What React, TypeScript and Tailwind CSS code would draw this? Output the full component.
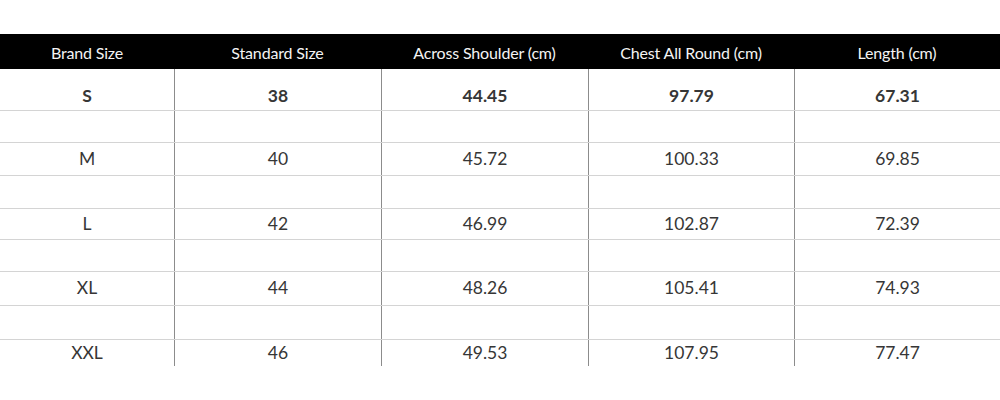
const COLS = ["Brand Size", "Standard Size", "Across Shoulder (cm)", "Chest All Round (cm)", "Length (cm)"];

type Row = { cells: string[]; h: string; bold?: boolean; pad?: string };

const ROWS: Row[] = [
  { cells: ["S", "38", "44.45", "97.79", "67.31"], h: "h-[41px]", bold: true, pad: "pt-[13px]" },
  { cells: ["", "", "", "", ""], h: "h-[32px]" },
  { cells: ["M", "40", "45.72", "100.33", "69.85"], h: "h-[33px]" },
  { cells: ["", "", "", "", ""], h: "h-[33px]" },
  { cells: ["L", "42", "46.99", "102.87", "72.39"], h: "h-[31px]" },
  { cells: ["", "", "", "", ""], h: "h-[32px]" },
  { cells: ["XL", "44", "48.26", "105.41", "74.93"], h: "h-[34px]" },
  { cells: ["", "", "", "", ""], h: "h-[34px]" },
  { cells: ["XXL", "46", "49.53", "107.95", "77.47"], h: "h-[26px]" },
];

const grid = "grid grid-cols-[174px_207px_207px_206px_206px]";

export default function App() {
  return (
    <div className="h-[400px] w-[1000px] overflow-hidden bg-white pt-[34px] font-['Lato','Liberation_Sans',sans-serif]">
      <div className={`${grid} h-[35px] bg-black text-[16px] tracking-[-0.01em] text-[#f4f4f4]`}>
        {COLS.map((c) => (
          <div key={c} className="flex items-center justify-center pt-[2px]">
            {c}
          </div>
        ))}
      </div>
      {ROWS.map((row, i) => (
        <div
          key={i}
          className={`${grid} ${row.h} ${i > 0 ? "border-t border-[#d4d4d4]" : ""} text-[17.5px] text-[#363636] ${row.bold ? "font-bold" : ""}`}
        >
          {row.cells.map((c, j) => (
            <div
              key={j}
              className={`flex items-center justify-center ${row.pad ?? ""} ${j > 0 ? "border-l border-[#8c8c8c]" : ""}`}
            >
              {c}
            </div>
          ))}
        </div>
      ))}
    </div>
  );
}
